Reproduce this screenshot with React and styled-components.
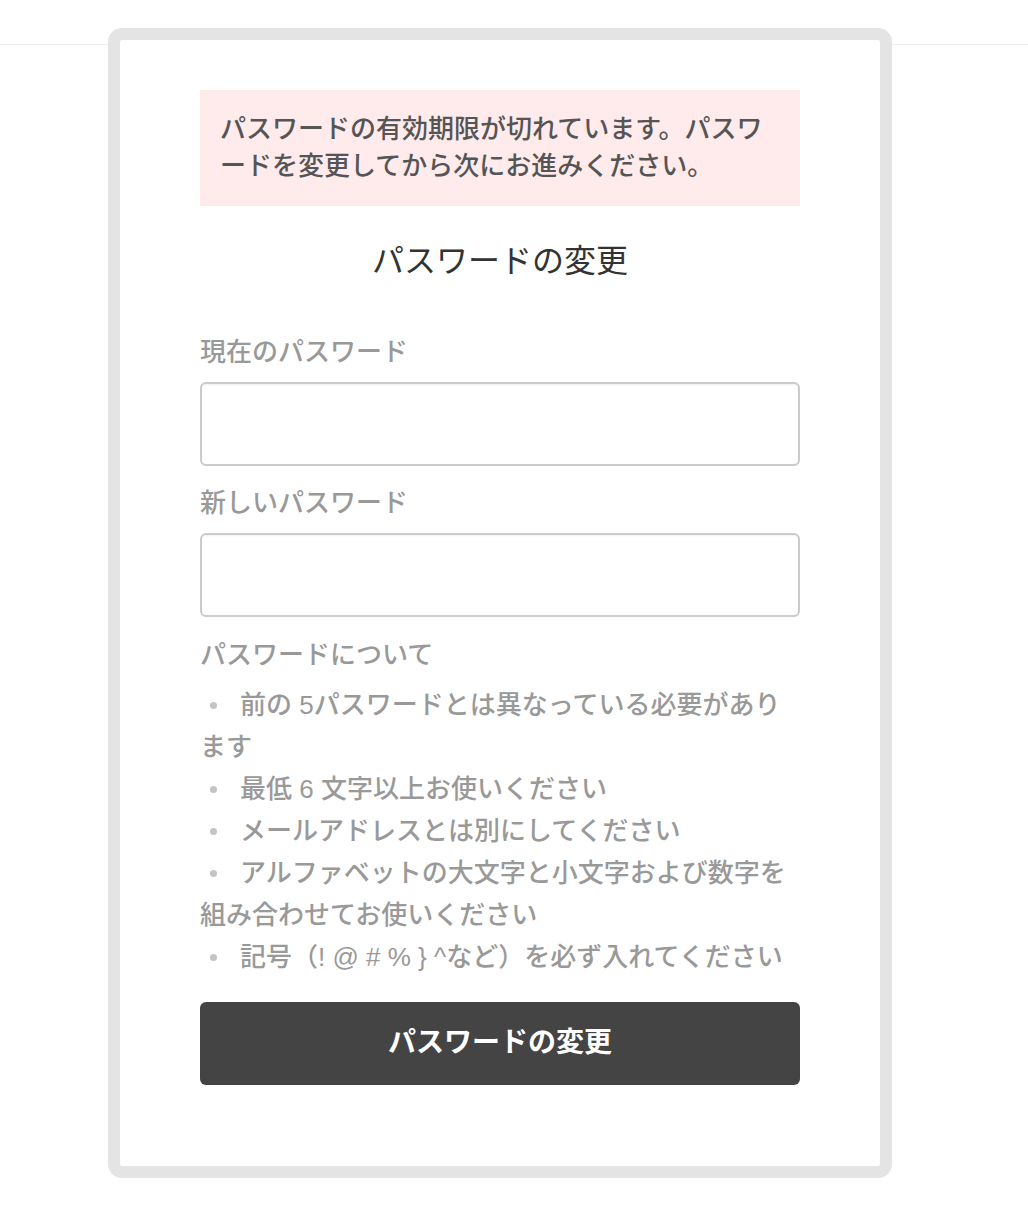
import React from "react";
import styled, { createGlobalStyle } from "styled-components";

const GlobalStyle = createGlobalStyle`
  html, body { margin: 0; padding: 0; background: #ffffff; }
  body { font-family: "Liberation Sans", "Noto Sans CJK JP", sans-serif; }
  * { box-sizing: border-box; }
`;

const Header = styled.div`
  height: 45px;
  border-bottom: 1px solid #ececec;
`;

const Wrapper = styled.div`
  width: 1000px;
  padding-bottom: 50px;
`;

const Card = styled.div`
  position: relative;
  width: 784px;
  margin: -17px auto 0;
  background: #fff;
  border: 12px solid #e4e4e4;
  border-radius: 14px;
  padding: 50px 80px 81px;
  display: flex;
  flex-direction: column;
`;

const Alert = styled.div`
  background: #ffebeb;
  color: #555;
  font-size: 26px;
  font-weight: 500;
  line-height: 37px;
  padding: 21px 20px;
`;

const Title = styled.h2`
  margin: 33px 0 0;
  text-align: center;
  font-weight: 400;
  font-size: 32px;
  line-height: 44px;
  color: #333;
`;

const Label = styled.label`
  display: block;
  color: #999;
  font-size: 26px;
  font-weight: 500;
  line-height: 36px;
  margin-top: ${(p) => p.$top}px;
`;

const Input = styled.input`
  display: block;
  width: 100%;
  height: 84px;
  margin-top: 12px;
  border: 2px solid #cbcbcb;
  border-radius: 6px;
  box-shadow: inset 0 1px 2px rgba(0, 0, 0, 0.06);
  background: #fff;
  font-size: 24px;
  padding: 0 16px;
  outline: none;
`;

const List = styled.ul`
  list-style: none;
  margin: 11px 0 0;
  padding: 0;
  color: #999;
  font-size: 26px;
  font-weight: 500;
  line-height: 42px;
`;

const Item = styled.li`
  &::before {
    content: "";
    display: inline-block;
    width: 7px;
    height: 7px;
    border-radius: 50%;
    background: #c4c4c4;
    margin: 0 23px 0 10px;
    vertical-align: middle;
    position: relative;
    top: -2px;
  }
`;

const Button = styled.button`
  margin-top: 24px;
  height: 83px;
  width: 100%;
  border: none;
  border-radius: 6px;
  background: #444444;
  color: #fff;
  font-family: "Noto Sans CJK JP", sans-serif;
  font-weight: 700;
  font-size: 28px;
  line-height: 1;
  padding: 0 0 8px;
  cursor: pointer;
`;

const rules = [
  "前の 5パスワードとは異なっている必要があります",
  "最低 6 文字以上お使いください",
  "メールアドレスとは別にしてください",
  "アルファベットの大文字と小文字および数字を組み合わせてお使いください",
  "記号（! @ # % } ^など）を必ず入れてください",
];

export default function App() {
  return (
    <>
      <GlobalStyle />
      <Header />
      <Wrapper>
        <Card>
          <Alert>パスワードの有効期限が切れています。パスワードを変更してから次にお進みください。</Alert>
          <Title>パスワードの変更</Title>
          <Label $top={51}>現在のパスワード</Label>
          <Input type="password" />
          <Label $top={19}>新しいパスワード</Label>
          <Input type="password" />
          <Label $top={20}>パスワードについて</Label>
          <List>
            {rules.map((r) => (
              <Item key={r}>{r}</Item>
            ))}
          </List>
          <Button>パスワードの変更</Button>
        </Card>
      </Wrapper>
    </>
  );
}
